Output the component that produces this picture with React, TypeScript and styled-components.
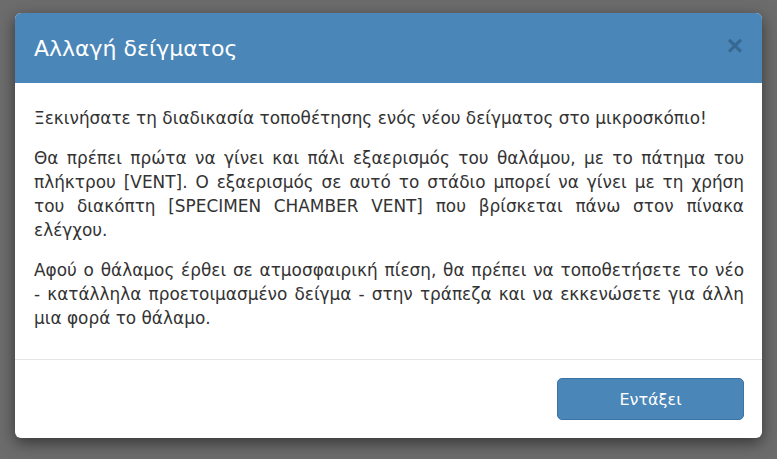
import React from "react";
import styled, { createGlobalStyle } from "styled-components";

const Global = createGlobalStyle`
  html, body { margin: 0; padding: 0; }
  body {
    width: 777px; height: 459px; overflow: hidden;
    background: #6c6c6c;
    font-family: "DejaVu Sans", Verdana, sans-serif;
  }
`;

const Backdrop = styled.div`
  width: 777px;
  height: 459px;
  padding: 13px 15px 0 15px;
  box-sizing: border-box;
`;

const Dialog = styled.div`
  width: 747px;
  height: 425px;
  background: #fff;
  border-radius: 6px;
  overflow: hidden;
  box-shadow: 0 5px 15px rgba(0, 0, 0, 0.5);
  display: flex;
  flex-direction: column;
`;

const Header = styled.div`
  height: 70px;
  background: #4a86b8;
  display: flex;
  align-items: center;
  justify-content: space-between;
  padding: 0 19px 0 19px;
  box-sizing: border-box;
`;

const Title = styled.h4`
  margin: 0;
  color: #fff;
  font-size: 22px;
  font-weight: normal;
`;

const Close = styled.button`
  background: none;
  border: none;
  padding: 0 0 4px 0;
  color: #2f5f86;
  opacity: 0.75;
  font-size: 28px;
  font-weight: bold;
  line-height: 1;
  font-family: "Liberation Sans", Arial, sans-serif;
  cursor: pointer;
`;

const Body = styled.div`
  padding: 23px 18px 0 19px;
  flex: 1;
  border-bottom: 1px solid #e5e5e5;
`;

const Para = styled.p`
  margin: 0 0 16px 0;
  font-size: 16.9px;
  line-height: 24px;
  color: #333;
  text-align: justify;
`;

const NoWrap = styled.span`
  white-space: nowrap;
`;

const Footer = styled.div`
  height: 78px;
  display: flex;
  align-items: center;
  justify-content: flex-end;
  padding: 0 18px;
  box-sizing: border-box;
`;

const Button = styled.button`
  width: 187px;
  height: 42px;
  background: #4a86b8;
  border: 1px solid #3d74a3;
  border-radius: 5px;
  color: #fff;
  font-size: 16px;
  font-family: "DejaVu Sans", Verdana, sans-serif;
`;

export default function App() {
  return (
    <>
      <Global />
      <Backdrop>
        <Dialog>
          <Header>
            <Title>Αλλαγή δείγματος</Title>
            <Close>×</Close>
          </Header>
          <Body>
            <Para>Ξεκινήσατε τη διαδικασία τοποθέτησης ενός νέου δείγματος στο μικροσκόπιο!</Para>
            <Para>
              Θα πρέπει πρώτα να γίνει και πάλι εξαερισμός του θαλάμου, με το πάτημα του πλήκτρου [VENT]. Ο εξαερισμός σε αυτό το στάδιο μπορεί να γίνει με τη χρήση του διακόπτη [SPECIMEN CHAMBER VENT] που βρίσκεται πάνω στον πίνακα ελέγχου.
            </Para>
            <Para>
              Αφού ο θάλαμος έρθει σε ατμοσφαιρική πίεση, θα πρέπει να τοποθετήσετε το νέο{" "}
              <NoWrap>- κατάλληλα</NoWrap> προετοιμασμένο δείγμα - στην τράπεζα και να εκκενώσετε για άλλη μια φορά το θάλαμο.
            </Para>
          </Body>
          <Footer>
            <Button>Εντάξει</Button>
          </Footer>
        </Dialog>
      </Backdrop>
    </>
  );
}
